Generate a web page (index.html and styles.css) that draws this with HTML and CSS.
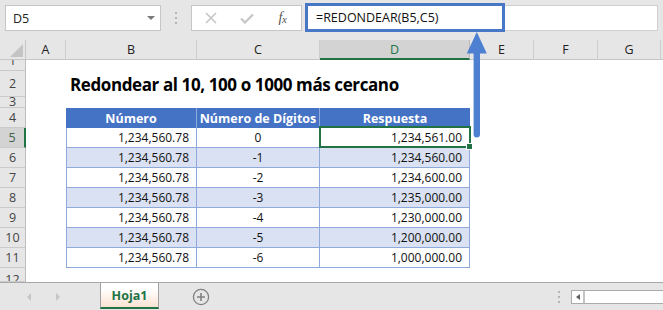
FILE: index.html
```html
<!DOCTYPE html>
<html lang="es">
<head>
<meta charset="utf-8">
<title>Redondear</title>
<link rel="stylesheet" href="styles.css">
</head>
<body>
<div class="app">
  <div class="fbar">
    <div class="namebox"><span>D5</span><span class="caret"></span></div>
    <div class="grip"><i></i><i></i><i></i></div>
    <div class="fxbox">
      <span class="ico"><svg width="12" height="12" viewBox="0 0 12 12"><path d="M1 1L11 11M11 1L1 11" stroke="#c4c4c4" stroke-width="1.5" fill="none"/></svg></span>
      <span class="ico"><svg width="14" height="11" viewBox="0 0 14 11"><path d="M1 5.5L5 9.5L13 1.5" stroke="#c8c8c8" stroke-width="2.4" fill="none"/></svg></span>
      <span class="ico fx">f<span class="fx-x">x</span></span>
    </div>
    <div class="formula"><div class="hl">=REDONDEAR(B5,C5)</div></div>
  </div>

  <div class="sheet">
    <div class="row colhdr">
      <div class="corner"><span class="tri"></span></div>
      <div class="ch">A</div><div class="ch">B</div><div class="ch">C</div><div class="ch sel-col">D</div><div class="ch">E</div><div class="ch">F</div><div class="ch">G</div><div class="ch last"></div>
    </div>
    <div class="row r1"><div class="rh"><span class="up">1</span></div></div>
    <div class="row r2"><div class="rh">2</div><div></div><div class="title">Redondear al 10, 100 o 1000 más cercano</div></div>
    <div class="row r3"><div class="rh">3</div></div>
    <div class="row rr"><div class="rh">4</div><div></div><div class="th">Número</div><div class="th">Número de Dígitos</div><div class="th">Respuesta</div></div>
    <div class="row rr"><div class="rh sel-row">5</div><div></div><div class="td b">1,234,560.78</div><div class="td c">0</div><div class="td d active">1,234,561.00<span class="selbox"><span class="handle"></span></span></div></div>
    <div class="row rr band"><div class="rh">6</div><div></div><div class="td b">1,234,560.78</div><div class="td c">-1</div><div class="td d">1,234,560.00</div></div>
    <div class="row rr"><div class="rh">7</div><div></div><div class="td b">1,234,560.78</div><div class="td c">-2</div><div class="td d">1,234,600.00</div></div>
    <div class="row rr band"><div class="rh">8</div><div></div><div class="td b">1,234,560.78</div><div class="td c">-3</div><div class="td d">1,235,000.00</div></div>
    <div class="row rr"><div class="rh">9</div><div></div><div class="td b">1,234,560.78</div><div class="td c">-4</div><div class="td d">1,230,000.00</div></div>
    <div class="row rr band"><div class="rh">10</div><div></div><div class="td b">1,234,560.78</div><div class="td c">-5</div><div class="td d">1,200,000.00</div></div>
    <div class="row rr"><div class="rh">11</div><div></div><div class="td b">1,234,560.78</div><div class="td c">-6</div><div class="td d">1,000,000.00</div></div>
    <div class="row r12"><div class="rh"><span class="down">12</span></div></div>
  </div>

  <div class="tabs">
    <div class="nav"><span class="nav-l"></span><span class="nav-r"></span></div>
    <div class="tab">Hoja1</div>
    <div class="add"><svg width="18" height="18" viewBox="0 0 18 18"><circle cx="9" cy="9" r="7.6" stroke="#808080" stroke-width="1.3" fill="none"/><path d="M9 5V13M5 9H13" stroke="#808080" stroke-width="1.6"/></svg></div>
    <div class="spacer"></div>
    <div class="grip2"><i></i><i></i><i></i></div>
    <div class="hscroll"><span class="hs-btn"><span class="hs-tri"></span></span></div>
  </div>

  <svg class="arrow" width="663" height="310" viewBox="0 0 663 310">
    <path d="M476.8 32L466.8 53.5H486.8Z" fill="#4e80d1"/>
    <rect x="473.6" y="50" width="6.4" height="87.5" rx="3.2" fill="#4e80d1"/>
  </svg>
</div>
</body>
</html>
```

FILE: styles.css
```css
body {
  margin: 0;
  background: #fff;
  font-family: "Open Sans", "Noto Sans", sans-serif;
}
.app {
  position: relative;
  width: 663px;
  height: 310px;
  overflow: hidden;
  display: flex;
  flex-direction: column;
}

/* formula bar */
.fbar {
  height: 40px;
  flex: none;
  box-sizing: border-box;
  background: #e6e6e6;
  display: flex;
  align-items: flex-start;
  padding: 5px 0 0 5px;
}
.namebox {
  width: 156px;
  height: 26px;
  box-sizing: border-box;
  background: #fff;
  border: 1px solid #c6c6c6;
  display: flex;
  align-items: center;
  justify-content: space-between;
  padding: 0 5px 0 7px;
  font-size: 12.5px;
  color: #222;
}
.caret {
  width: 0;
  height: 0;
  border-left: 4px solid transparent;
  border-right: 4px solid transparent;
  border-top: 4px solid #7a7a7a;
}
.grip {
  width: 30px;
  height: 26px;
  display: flex;
  flex-direction: column;
  align-items: center;
  justify-content: center;
  gap: 3px;
}
.grip i, .grip2 i {
  display: block;
  width: 2px;
  height: 2px;
  background: #b4b4b4;
}
.fxbox {
  width: 111px;
  height: 26px;
  box-sizing: border-box;
  background: #fff;
  border: 1px solid #c6c6c6;
  display: grid;
  grid-template-columns: 37px 35px 37px;
  align-items: center;
}
.ico {
  display: flex;
  justify-content: center;
  align-items: center;
}
.fx {
  font-family: "Liberation Serif", serif;
  font-style: italic;
  font-size: 14px;
  color: #555;
  letter-spacing: -0.5px;
}
.fx-x {
  font-size: 11px;
  position: relative;
  top: 1px;
}
.formula {
  position: relative;
  margin-left: 3px;
  width: 353px;
  height: 26px;
  box-sizing: border-box;
  background: #fff;
  border: 1px solid #d0d0d0;
}
.hl {
  position: absolute;
  left: -1px;
  top: -3px;
  width: 200px;
  height: 29px;
  box-sizing: border-box;
  border: 3px solid #4877c6;
  padding-left: 8px;
  display: flex;
  align-items: center;
  font-size: 12.5px;
  color: #111;
  white-space: nowrap;
}

/* sheet */
.sheet {
  flex: none;
  display: flex;
  flex-direction: column;
}
.row {
  display: grid;
  grid-template-columns: 26px 40px 131px 123px 150px 64px 64px 63px 1fr;
  box-sizing: border-box;
}
.colhdr { height: 20px; background: #e6e6e6; }
.r1 { height: 11px; }
.r2 { height: 26px; }
.r3 { height: 11px; }
.rr { height: 20px; }
.r12 { height: 14px; }

.corner {
  position: relative;
  box-sizing: border-box;
  border-right: 1px solid #c6c6c6;
  border-bottom: 1px solid #c6c6c6;
}
.tri {
  position: absolute;
  right: 2px;
  bottom: 2px;
  width: 0;
  height: 0;
  border-left: 13px solid transparent;
  border-bottom: 13px solid #c4c4c4;
}
.ch {
  box-sizing: border-box;
  border-right: 1px solid #cdcdcd;
  border-bottom: 1px solid #c6c6c6;
  display: flex;
  align-items: center;
  justify-content: center;
  font-size: 12.5px;
  color: #222;
}
.ch.last { border-right: none; }
.ch.sel-col {
  background: #d3d3d3;
  color: #217346;
  border-bottom: 2px solid #217346;
  border-right-color: #bcbcbc;
}
.rh {
  box-sizing: border-box;
  background: #e6e6e6;
  border-right: 1px solid #bdbdbd;
  border-bottom: 1px solid #cacaca;
  display: flex;
  align-items: center;
  justify-content: center;
  overflow: hidden;
  font-size: 12.5px;
  line-height: 20px;
  color: #444;
}
.rh .up { margin-bottom: 9px; }
.rh .down { margin-top: 10px; }
.rh.sel-row {
  background: #d3d3d3;
  color: #3f5f49;
  border-right: 2px solid #217346;
}

.title {
  grid-column: 3 / 7;
  display: flex;
  align-items: flex-end;
  padding: 0 0 1px 4px;
  font-weight: 700;
  font-size: 17px;
  letter-spacing: -0.4px;
  color: #000;
  white-space: nowrap;
}

.th {
  background: #4472c4;
  color: #fff;
  font-weight: 700;
  font-size: 12.5px;
  display: flex;
  align-items: center;
  justify-content: center;
  box-sizing: border-box;
  border-right: 1px solid #8ea9db;
  white-space: nowrap;
}
.th:last-child { border-right: none; }
.td {
  box-sizing: border-box;
  font-size: 12px;
  color: #111;
  display: flex;
  align-items: center;
  border-right: 1px solid #8ea9db;
  border-bottom: 1px solid #8ea9db;
  white-space: nowrap;
}
.band .td { background: #d9e1f2; }
.td.b { border-left: 1px solid #8ea9db; justify-content: flex-end; padding-right: 7px; }
.td.c { justify-content: center; }
.td.d { justify-content: flex-end; padding-right: 7px; }
.td.active { position: relative; }
.selbox {
  position: absolute;
  left: -1px;
  top: -2px;
  right: -2px;
  bottom: -1px;
  border: 2px solid #217346;
}
.handle {
  position: absolute;
  right: -4px;
  bottom: -4px;
  width: 5px;
  height: 5px;
  background: #217346;
  border: 1px solid #fff;
}

/* tabs */
.tabs {
  flex: none;
  height: 28px;
  box-sizing: border-box;
  border-top: 1px solid #a8a8a8;
  background: #e6e6e6;
  display: flex;
  align-items: flex-start;
}
.nav {
  width: 100px;
  height: 27px;
  display: flex;
  align-items: center;
  padding-left: 27px;
  box-sizing: border-box;
  gap: 25px;
}
.nav-l, .nav-r {
  width: 0;
  height: 0;
  border-top: 4px solid transparent;
  border-bottom: 4px solid transparent;
}
.nav-l { border-right: 4px solid #c6c6c6; }
.nav-r { border-left: 4px solid #c6c6c6; }
.tab {
  width: 59px;
  height: 26px;
  box-sizing: border-box;
  border-left: 1px solid #a0a0a0;
  border-right: 1px solid #a0a0a0;
  border-bottom: 2px solid #217346;
  background: linear-gradient(#ffffff 25%, #fbe2d2);
  color: #217346;
  font-weight: 700;
  font-size: 12.5px;
  display: flex;
  align-items: center;
  justify-content: center;
}
.add {
  margin-left: 33px;
  height: 27px;
  display: flex;
  align-items: center;
}
.spacer { flex: 1; }
.grip2 {
  width: 10px;
  height: 27px;
  display: flex;
  flex-direction: column;
  align-items: center;
  justify-content: center;
  gap: 3px;
  margin-right: 7px;
}
.hscroll {
  margin-top: 7px;
  width: 92px;
  height: 14px;
  box-sizing: border-box;
  background: #fff;
  border: 1px solid #ababab;
  border-right: none;
  display: flex;
}
.hs-btn {
  width: 13px;
  height: 100%;
  box-sizing: border-box;
  border-right: 2px solid #c4c4c4;
  display: flex;
  align-items: center;
  justify-content: center;
}
.hs-tri {
  width: 0;
  height: 0;
  border-top: 3.5px solid transparent;
  border-bottom: 3.5px solid transparent;
  border-right: 4px solid #606060;
}

.arrow {
  position: absolute;
  left: 0;
  top: 0;
  pointer-events: none;
}
```
